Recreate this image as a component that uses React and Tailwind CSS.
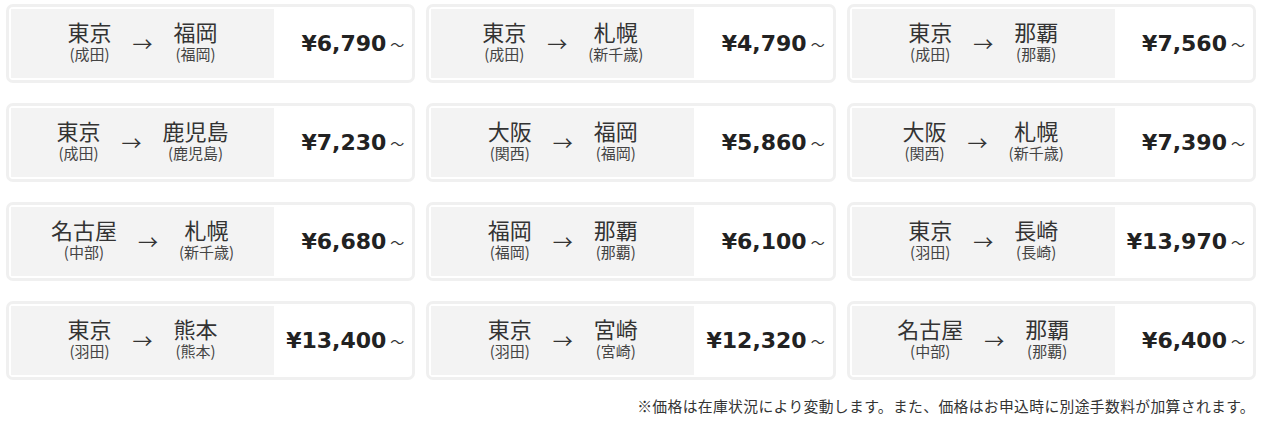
const routes = [
  { from: '東京', fromSub: '成田', to: '福岡', toSub: '福岡', price: '¥6,790' },
  { from: '東京', fromSub: '成田', to: '札幌', toSub: '新千歳', price: '¥4,790' },
  { from: '東京', fromSub: '成田', to: '那覇', toSub: '那覇', price: '¥7,560' },
  { from: '東京', fromSub: '成田', to: '鹿児島', toSub: '鹿児島', price: '¥7,230' },
  { from: '大阪', fromSub: '関西', to: '福岡', toSub: '福岡', price: '¥5,860' },
  { from: '大阪', fromSub: '関西', to: '札幌', toSub: '新千歳', price: '¥7,390' },
  { from: '名古屋', fromSub: '中部', to: '札幌', toSub: '新千歳', price: '¥6,680' },
  { from: '福岡', fromSub: '福岡', to: '那覇', toSub: '那覇', price: '¥6,100' },
  { from: '東京', fromSub: '羽田', to: '長崎', toSub: '長崎', price: '¥13,970' },
  { from: '東京', fromSub: '羽田', to: '熊本', toSub: '熊本', price: '¥13,400' },
  { from: '東京', fromSub: '羽田', to: '宮崎', toSub: '宮崎', price: '¥12,320' },
  { from: '名古屋', fromSub: '中部', to: '那覇', toSub: '那覇', price: '¥6,400' },
];

// 空港名ブロック
function City({ name, sub }) {
  return (
    <div className="flex flex-col items-center text-[#333] mb-[5px]">
      <span className="text-[22px] leading-[26px]">{name}</span>
      <span className="text-[15px] leading-[20px] text-[#444]">
        ({sub})
      </span>
    </div>
  );
}

function RouteCard({ route }) {
  return (
    <div className="flex border-[3px] border-[#f0f0f0] rounded-[7px] p-[2px] bg-white">
      <div className="w-[263px] h-[69px] bg-[#f3f3f3] flex items-center justify-center gap-[21px]">
        <City name={route.from} sub={route.fromSub} />
        <span className="text-[20px] text-[#333] leading-none">→</span>
        <City name={route.to} sub={route.toSub} />
      </div>
      <div className="flex-1 flex items-center justify-end pr-[6px]">
        <span className="font-['DejaVu_Sans',sans-serif] font-bold text-[22px] text-[#222]">
          {route.price}
        </span>
        <span className="ml-[4px] text-[14px] text-[#333] mt-[2px]">～</span>
      </div>
    </div>
  );
}

export default function App() {
  return (
    <div className="w-[1263px] h-[430px] bg-white font-['Noto_Sans_CJK_JP',sans-serif] pt-[4px] pl-[6px] pr-[7px]">
      <div className="grid grid-cols-3 gap-x-[11px] gap-y-[20px] w-[1250px]">
        {routes.map((r, i) => (
          <RouteCard key={i} route={r} />
        ))}
      </div>
      <p className="mt-[15px] text-right pr-[1px] text-[14.8px] text-[#333] tracking-[0.35px]">
        ※価格は在庫状況により変動します。また、価格はお申込時に別途手数料が加算されます。
      </p>
    </div>
  );
}
